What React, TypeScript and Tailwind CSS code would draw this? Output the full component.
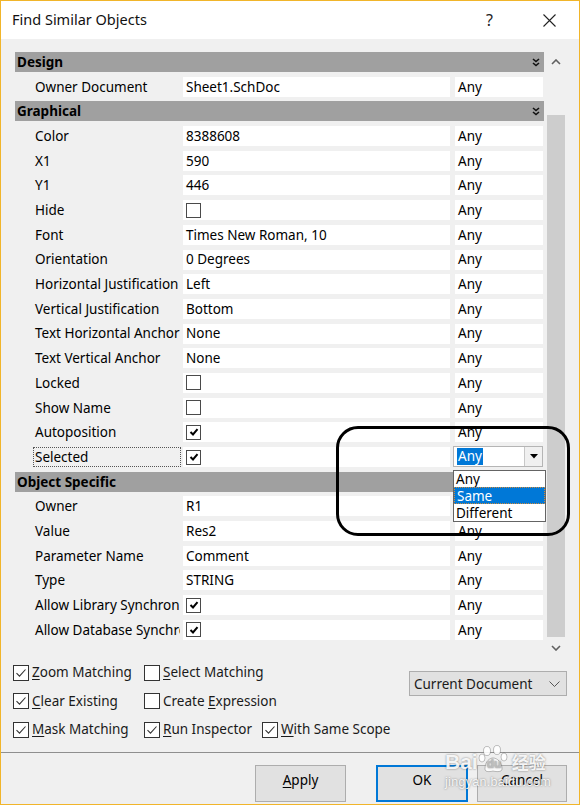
import React from "react";

type Row =
  | { kind: "h"; title: string }
  | { kind: "r"; label: string; value?: string; check?: boolean; selected?: boolean };

const rows: Row[] = [
  { kind: "h", title: "Design" },
  { kind: "r", label: "Owner Document", value: "Sheet1.SchDoc" },
  { kind: "h", title: "Graphical" },
  { kind: "r", label: "Color", value: "8388608" },
  { kind: "r", label: "X1", value: "590" },
  { kind: "r", label: "Y1", value: "446" },
  { kind: "r", label: "Hide", check: false },
  { kind: "r", label: "Font", value: "Times New Roman, 10" },
  { kind: "r", label: "Orientation", value: "0 Degrees" },
  { kind: "r", label: "Horizontal Justification", value: "Left" },
  { kind: "r", label: "Vertical Justification", value: "Bottom" },
  { kind: "r", label: "Text Horizontal Anchor", value: "None" },
  { kind: "r", label: "Text Vertical Anchor", value: "None" },
  { kind: "r", label: "Locked", check: false },
  { kind: "r", label: "Show Name", check: false },
  { kind: "r", label: "Autoposition", check: true },
  { kind: "r", label: "Selected", check: true, selected: true },
  { kind: "h", title: "Object Specific" },
  { kind: "r", label: "Owner", value: "R1" },
  { kind: "r", label: "Value", value: "Res2" },
  { kind: "r", label: "Parameter Name", value: "Comment" },
  { kind: "r", label: "Type", value: "STRING" },
  { kind: "r", label: "Allow Library Synchronization", check: true },
  { kind: "r", label: "Allow Database Synchronization", check: true },
];

function DoubleChevron() {
  return (
    <svg width="8" height="9" viewBox="0 0 8 9" className="ml-auto">
      <path d="M1 1 L4 3.5 L7 1" stroke="#111" strokeWidth="1.6" fill="none" />
      <path d="M1 5 L4 7.5 L7 5" stroke="#111" strokeWidth="1.6" fill="none" />
    </svg>
  );
}

function GridCheck({ checked }: { checked: boolean }) {
  return (
    <div className="w-[15px] h-[15px] border border-[#4a4a4a] bg-white flex items-center justify-center">
      {checked && (
        <svg width="10" height="10" viewBox="0 0 10 10">
          <path d="M1.5 5 L4 7.5 L8.5 2.2" stroke="#000" strokeWidth="2" fill="none" />
        </svg>
      )}
    </div>
  );
}

function OptCheck({ checked }: { checked: boolean }) {
  return (
    <div className="w-[16px] h-[16px] border border-[#333] bg-white flex items-center justify-center shrink-0">
      {checked && (
        <svg width="12" height="12" viewBox="0 0 12 12">
          <path d="M1.5 6.2 L4.5 9.2 L10.5 2.5" stroke="#333" strokeWidth="1.1" fill="none" />
        </svg>
      )}
    </div>
  );
}

function Opt({ checked, pre, u, post, w }: { checked: boolean; pre?: string; u: string; post: string; w: string }) {
  return (
    <div className={"flex items-center h-[17px] " + w}>
      <OptCheck checked={checked} />
      <span className="ml-[3px] whitespace-nowrap text-[#1a1a1a]">
        {pre}
        <span className="underline underline-offset-2">{u}</span>
        {post}
      </span>
    </div>
  );
}

function DataRow({ r }: { r: Extract<Row, { kind: "r" }> }) {
  return (
    <div className="h-[20px] flex">
      <div className="w-[166px] shrink-0 pl-[18px] flex items-center overflow-hidden whitespace-nowrap">
        <div
          className={
            "h-[20px] w-full flex items-center pl-[1px] overflow-hidden border border-dotted " +
            (r.selected ? "border-[#555]" : "border-transparent")
          }
        >
          {r.label}
        </div>
      </div>
      <div className="w-[267px] ml-[2px] shrink-0 bg-white flex items-center pl-[3px] whitespace-nowrap">
        {r.check !== undefined ? <GridCheck checked={r.check} /> : r.value}
      </div>
      {r.selected ? (
        <div className="relative w-[90px] h-[21px] -mt-[1px] ml-[3px] shrink-0 bg-white border border-[#b5b5b5] flex items-center">
          <span className="ml-[3px] bg-[#0078d7] text-white px-[1px] leading-[17px]">Any</span>
          <div className="ml-auto w-[18px] h-[19px] bg-[#f0f0f0] border-l border-[#c8c8c8] flex items-center justify-center">
            <svg width="8" height="5" viewBox="0 0 8 5">
              <path d="M0 0 L8 0 L4 4.5 Z" fill="#000" />
            </svg>
          </div>
          <div className="absolute top-[23px] -left-px w-[93px] border border-[#646464] bg-white flex flex-col z-10 leading-[16px]">
            <div className="h-[16px] flex items-center pl-[2px]">Any</div>
            <div className="h-[17px] flex items-center pl-[2px] bg-[#0078d7] text-white border border-dotted border-[#d08a3a]">Same</div>
            <div className="h-[17px] flex items-center pl-[2px]">Different</div>
          </div>
        </div>
      ) : (
        <div className="w-[88px] ml-[5px] shrink-0 bg-white flex items-center pl-[3px]">Any</div>
      )}
    </div>
  );
}

export default function App() {
  return (
    <div className="relative w-[580px] h-[805px] border border-[#f1b52a] bg-[#f0f0f0] flex flex-col overflow-hidden font-['Noto_Sans',sans-serif] text-[13.5px] text-black">
      {/* Title bar */}
      <div className="h-[38px] shrink-0 bg-white flex items-center pl-[11px]">
        <span className="text-[14.5px] text-[#111]">Find Similar Objects</span>
        <span className="ml-auto text-[16px] text-[#222]">?</span>
        <svg width="13" height="13" viewBox="0 0 13 13" className="ml-[50px] mr-[23px]">
          <path d="M0.5 0.5 L12.5 12.5 M12.5 0.5 L0.5 12.5" stroke="#222" strokeWidth="1.1" />
        </svg>
      </div>

      {/* Grid + scrollbar */}
      <div className="flex pt-[13px] pl-[14px] shrink-0">
        <div className="w-[529px] flex flex-col gap-[4.7px]">
          {rows.map((r, i) =>
            r.kind === "h" ? (
              <div key={i} className="h-[20px] bg-[#a0a0a0] flex items-center pl-[2px] pr-[4px] font-bold">
                <span>{r.title}</span>
                <DoubleChevron />
              </div>
            ) : (
              <DataRow key={i} r={r} />
            )
          )}
        </div>
        <div className="ml-[2px] w-[20px] h-[607px] flex flex-col items-center">
          <div className="h-[20px] flex items-center justify-center">
            <svg width="10" height="6" viewBox="0 0 10 6">
              <path d="M1 5 L5 1 L9 5" stroke="#606060" strokeWidth="1.6" fill="none" />
            </svg>
          </div>
          <div className="mt-[43px] w-[18px] h-[522px] bg-[#cdcdcd]" />
          <div className="h-[22px] flex items-center justify-center">
            <svg width="10" height="6" viewBox="0 0 10 6">
              <path d="M1 1 L5 5 L9 1" stroke="#606060" strokeWidth="1.6" fill="none" />
            </svg>
          </div>
        </div>
      </div>

      {/* Options */}
      <div className="h-[93px] shrink-0 flex">
        <div className="pl-[12px] pt-[5px] flex flex-col gap-[11.5px]">
          <div className="flex">
            <Opt checked u="Z" post="oom Matching" w="w-[131px]" />
            <Opt checked={false} u="S" post="elect Matching" w="w-[118px]" />
          </div>
          <div className="flex">
            <Opt checked u="C" post="lear Existing" w="w-[131px]" />
            <Opt checked={false} pre="Create " u="E" post="xpression" w="w-[118px]" />
          </div>
          <div className="flex">
            <Opt checked u="M" post="ask Matching" w="w-[131px]" />
            <Opt checked u="R" post="un Inspector" w="w-[118px]" />
            <Opt checked u="W" post="ith Same Scope" w="w-[140px]" />
          </div>
        </div>
        <div className="ml-auto mr-[12px] mt-[12px] w-[158px] h-[25px] bg-[#e1e1e1] border border-[#adadad] flex items-center pl-[4px] pt-[1px] text-[#1a1a1a]">
          <span>Current Document</span>
          <svg width="11" height="6" viewBox="0 0 11 6" className="ml-auto mr-[6px]">
            <path d="M0.5 0.5 L5.5 5.5 L10.5 0.5" stroke="#555" strokeWidth="1" fill="none" />
          </svg>
        </div>
      </div>

      {/* Separator */}
      <div className="h-px shrink-0 bg-[#8f8f8f]" />

      {/* Footer */}
      <div className="flex-1 flex items-start pt-[12px]">
        <div className="ml-[254px] w-[91px] h-[37px] bg-[#e1e1e1] border border-[#adadad] flex items-center justify-center pb-[6px]">
          <span>
            <span className="underline underline-offset-2">A</span>pply
          </span>
        </div>
        <div className="ml-[30px] w-[92px] h-[37px] bg-[#e1e1e1] border-2 border-[#0078d7] flex items-center justify-center pb-[6px]">
          OK
        </div>
        <div className="ml-[9px] w-[90px] h-[37px] bg-[#e1e1e1] border border-[#adadad] flex items-center justify-center pb-[6px]">
          Cancel
        </div>
      </div>

      {/* Annotation ring */}
      <div className="absolute left-[335px] top-[425px] w-[234px] h-[110px] border-[3px] border-black rounded-[22px] pointer-events-none" />

      {/* Watermark */}
      <div className="absolute left-[444px] top-[742px] w-[105px] h-[50px] pointer-events-none text-white/90 [text-shadow:0_0_2px_rgba(0,0,0,0.5)]">
        <div className="flex items-end h-[30px]">
          <span className="font-['Liberation_Sans',sans-serif] font-bold text-[21px] leading-[22px]">Bai</span>
          <div className="relative w-[32px] h-[28px]">
            <svg width="32" height="28" viewBox="0 0 32 28" className="absolute left-0 top-0">
              <g fill="rgba(255,255,255,0.9)" stroke="rgba(0,0,0,0.3)" strokeWidth="0.8">
                <ellipse cx="9" cy="6" rx="3.5" ry="4.5" />
                <ellipse cx="19" cy="5" rx="3.5" ry="4.5" />
                <ellipse cx="4" cy="13" rx="3" ry="4" />
                <ellipse cx="26" cy="12" rx="3" ry="4" />
                <path d="M7 24 C7 16 12 13 15 13 C19 13 24 17 24 24 C24 27 19 27 15 26 C11 27 7 27 7 24 Z" />
              </g>
            </svg>
            <span className="absolute left-[9px] top-[13px] font-['Liberation_Sans',sans-serif] font-bold text-[12px] leading-[12px] text-[#bdbdbd]">du</span>
          </div>
          <span className="font-['Noto_Sans_CJK_SC',sans-serif] font-bold text-[17px] leading-[22px] ml-[2px]">经验</span>
        </div>
        <div className="font-['Liberation_Sans',sans-serif] text-[12.5px] leading-[14px] mt-[2px] tracking-[0.3px]">jingyan.baidu.com</div>
      </div>
    </div>
  );
}
